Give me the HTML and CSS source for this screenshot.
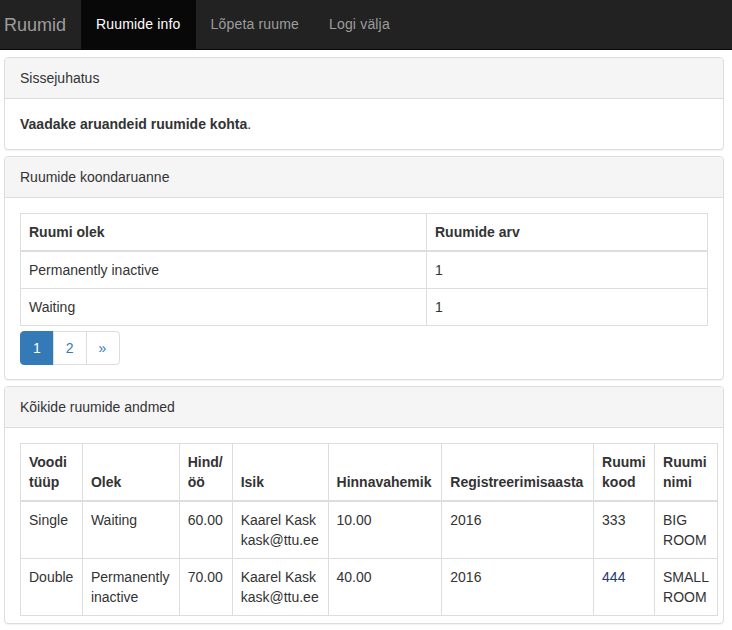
FILE: index.html
```html
<!DOCTYPE html>
<html lang="et">
<head>
<meta charset="utf-8">
<title>Ruumid</title>
<link rel="stylesheet" href="styles.css">
</head>
<body>
<nav class="navbar">
  <a class="brand" href="#">Ruumid</a>
  <ul class="nav">
    <li class="active"><a href="#">Ruumide info</a></li>
    <li><a href="#">Lõpeta ruume</a></li>
    <li><a href="#">Logi välja</a></li>
  </ul>
</nav>
<main class="page">
  <section class="panel">
    <div class="panel-heading">Sissejuhatus</div>
    <div class="panel-body"><strong>Vaadake aruandeid ruumide kohta</strong>.</div>
  </section>
  <section class="panel">
    <div class="panel-heading">Ruumide koondaruanne</div>
    <div class="panel-body body-mid">
      <table class="table summary">
        <thead>
          <tr><th class="col-olek">Ruumi olek</th><th>Ruumide arv</th></tr>
        </thead>
        <tbody>
          <tr><td>Permanently inactive</td><td>1</td></tr>
          <tr><td>Waiting</td><td>1</td></tr>
        </tbody>
      </table>
      <ul class="pagination">
        <li class="active"><a href="#">1</a></li>
        <li><a href="#">2</a></li>
        <li><a href="#">»</a></li>
      </ul>
    </div>
  </section>
  <section class="panel">
    <div class="panel-heading">Kõikide ruumide andmed</div>
    <div class="panel-body body-last">
      <table class="table rooms">
        <colgroup>
          <col class="c1"><col class="c2"><col class="c3"><col class="c4"><col class="c5"><col class="c6"><col class="c7"><col class="c8">
        </colgroup>
        <thead>
          <tr>
            <th>Voodi tüüp</th><th>Olek</th><th>Hind/ öö</th><th>Isik</th><th>Hinnavahemik</th><th>Registreerimisaasta</th><th>Ruumi kood</th><th>Ruumi nimi</th>
          </tr>
        </thead>
        <tbody>
          <tr>
            <td>Single</td><td>Waiting</td><td>60.00</td><td>Kaarel Kask kask@ttu.ee</td><td>10.00</td><td>2016</td><td>333</td><td>BIG ROOM</td>
          </tr>
          <tr>
            <td>Double</td><td>Permanently inactive</td><td>70.00</td><td>Kaarel Kask kask@ttu.ee</td><td>40.00</td><td>2016</td><td class="code-link">444</td><td>SMALL ROOM</td>
          </tr>
        </tbody>
      </table>
    </div>
  </section>
</main>
</body>
</html>
```
FILE: styles.css
```css
* { box-sizing: border-box; }
html, body { margin: 0; padding: 0; }
body {
  font-family: "Liberation Sans", Arial, Helvetica, sans-serif;
  font-size: 14px;
  line-height: 20px;
  color: #333;
  background: #fff;
}
a { text-decoration: none; }

.navbar {
  display: flex;
  height: 50px;
  background: #222;
  border-bottom: 1px solid #080808;
}
.brand {
  display: block;
  padding: 15px 15px 0 4px;
  font-size: 18px;
  line-height: 20px;
  color: #9d9d9d;
}
.nav {
  display: flex;
  list-style: none;
  margin: 0;
  padding: 0;
}
.nav a {
  display: block;
  padding: 15px;
  line-height: 19px;
  letter-spacing: 0.17px;
  color: #9d9d9d;
}
.nav .active a {
  background: #080808;
  color: #fff;
}

.page {
  padding: 7px 8px 0 4px;
}
.panel {
  border: 1px solid #ddd;
  border-radius: 4px;
  background: #fff;
  margin-bottom: 6px;
  box-shadow: 0 1px 1px rgba(0,0,0,0.05);
}
.panel-heading {
  background: #f5f5f5;
  border-bottom: 1px solid #ddd;
  border-radius: 3px 3px 0 0;
  padding: 10px 15px;
  color: #333;
}
.panel-body {
  padding: 15px;
}
.body-mid {
  padding-bottom: 14px;
}
.body-last {
  padding-bottom: 7px;
}

.table {
  width: 100%;
  border-collapse: collapse;
  border-spacing: 0;
  border: 1px solid #ddd;
}
.table th, .table td {
  border: 1px solid #ddd;
  padding: 8px;
  line-height: 20px;
  text-align: left;
}
.table th {
  vertical-align: bottom;
  border-bottom-width: 2px;
  font-weight: bold;
}
.table td {
  vertical-align: top;
}
.summary .col-olek { width: 406px; }

.rooms .c1 { width: 62px; }
.rooms .c2 { width: 97px; }
.rooms .c3 { width: 53px; }
.rooms .c4 { width: 96px; }
.rooms .c5 { width: 114px; }
.rooms .c6 { width: 152px; }
.rooms .c7 { width: 61px; }
.rooms .c8 { width: 63px; }
.rooms { width: 698px; }

.table.rooms td.code-link { color: #23396e; }

.pagination {
  display: flex;
  list-style: none;
  margin: 5px 0 0;
  padding: 0;
}
.pagination a {
  display: block;
  padding: 6px 12px;
  line-height: 20px;
  color: #337ab7;
  background: #fff;
  border: 1px solid #ddd;
  margin-left: -1px;
}
.pagination li:first-child a {
  margin-left: 0;
  border-radius: 4px 0 0 4px;
}
.pagination li:last-child a {
  padding-right: 13px;
  border-radius: 0 4px 4px 0;
}
.pagination .active a {
  background: #337ab7;
  border-color: #337ab7;
  color: #fff;
}
```
